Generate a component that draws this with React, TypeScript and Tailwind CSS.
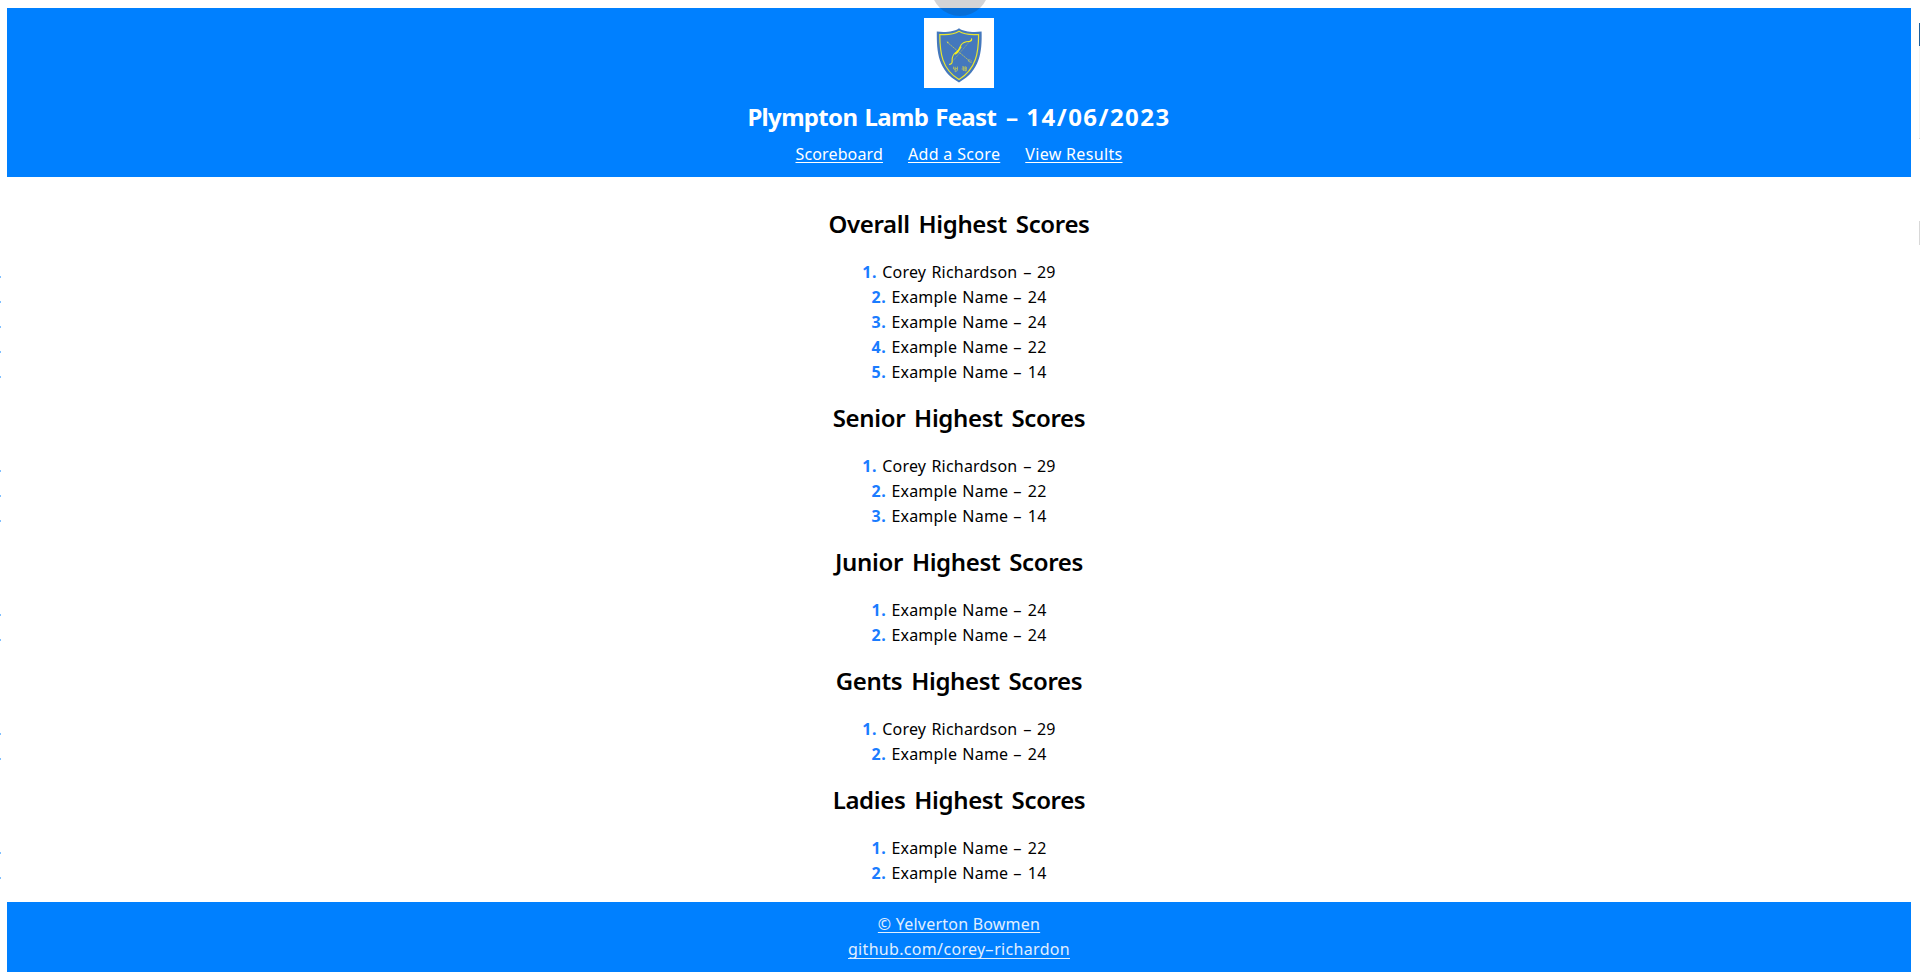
type Entry = { name: string; score: number };
type Board = { title: string; entries: Entry[] };

const corey: Entry = { name: "Corey Richardson", score: 29 };
const example = (score: number): Entry => ({ name: "Example Name", score });

const boards: Board[] = [
  { title: "Overall Highest Scores", entries: [corey, example(24), example(24), example(22), example(14)] },
  { title: "Senior Highest Scores", entries: [corey, example(22), example(14)] },
  { title: "Junior Highest Scores", entries: [example(24), example(24)] },
  { title: "Gents Highest Scores", entries: [corey, example(24)] },
  { title: "Ladies Highest Scores", entries: [example(22), example(14)] },
];

const link = "underline decoration-1 underline-offset-2 [text-decoration-skip-ink:none]";

function Crest() {
  return (
    <svg viewBox="0 0 70 70" className="block size-[70px] bg-white" role="img">
      <path d="M35 10.2C30.5 13.6 22 14.6 12.8 13.6C12.6 34 14 53 35 64.4C56 53 58.2 34 57.6 13.6C48 14.6 39.5 13.6 35 10.2Z" fill="#4478bd" />
      <path d="M35 13.3C30.8 16 23.5 17.1 15.8 16.5C15.8 34.5 17.8 51 35 61.6C52.2 51 54.6 34.5 54.6 16.5C46.8 17.1 39.2 16 35 13.3Z" fill="none" stroke="#e9e62e" strokeWidth="1.2" />
      <path d="M26.6 45.6L47.4 21.4" stroke="#a9b76b" strokeWidth="0.6" strokeDasharray="1.5 .6" />
      <path d="M23.2 24.2L45.5 43" stroke="#bdc561" strokeWidth="0.8" strokeDasharray="2 .4" />
      <path d="M22.6 23.6L24.8 24.1L23.6 25.5Z" fill="#d7d84a" />
      <path d="M43.8 42.6L46.4 41.4M45 43.8L47.8 42.6M45.6 44.8L48 44M44.6 41.6L44.8 44" stroke="#b4c06a" strokeWidth="0.6" />
      <path d="M25.6 46.4C27.8 46.2 28.3 44.8 28.1 43C27.8 38.5 28.8 36.2 32.6 33.9C36 31.8 35.2 30.2 37.2 26.8C39.3 23.5 42.4 23.6 45.6 23.4C47.1 23.2 47.8 22.4 47.6 20.8" fill="none" stroke="#f3ed20" strokeWidth="1.1" strokeLinecap="round" />
      <path d="M31 36C34.8 33.8 34.9 31.5 37 28.6" fill="none" stroke="#f3ed20" strokeWidth="1.7" />
      <path d="M29.6 48.6V51L31.4 51.4M31.2 48.8V53.8M33.4 48.6V52.4L31.4 53.8M31.4 50.6H33.2" fill="none" stroke="#c9cd53" strokeWidth="0.8" />
      <path d="M38 49.2L39.4 48.6V53M37.6 51H39.4M40.9 48.6V53M40.9 49H42.3V52.8H40.9M40.9 50.8H42.3" fill="none" stroke="#c9cd53" strokeWidth="0.8" />
    </svg>
  );
}

function Dash() {
  return <span className="mx-[1.8px] inline-block scale-x-[1.8]">-</span>;
}

function ScoreBoard({ title, entries }: Board) {
  return (
    <section className="mb-[17px]">
      <h2 className="mb-5 text-2xl/8 font-semibold tracking-[-0.35px] [word-spacing:3px]">{title}</h2>
      <ol>
        {entries.map((e, i) => (
          <li key={i} className="relative h-[25px] leading-[25px] tracking-[0.2px] [word-spacing:0.9px]">
            <span className="absolute top-4 -left-[7px] h-0.5 w-px bg-[#80c0ff]" />
            <span className="font-bold tracking-[0.5px] text-[#1a7cff]">{i + 1}.</span> {e.name} <Dash /> {e.score}
          </li>
        ))}
      </ol>
    </section>
  );
}

export default function App() {
  return (
    <div className="relative h-[973px] overflow-hidden bg-white pt-2 pr-[9px] pl-[7px] text-center font-['Noto_Sans',sans-serif] text-base text-black">
      <header className="flex h-[169px] flex-col items-center bg-[#0080ff] pt-2.5 text-white">
        <Crest />
        <h1 className="mt-[13px] text-2xl/8 font-bold tracking-[-0.67px] [word-spacing:1.5px]">
          Plympton Lamb Feast <span className="mx-[4.5px] inline-block scale-x-[1.7] font-semibold">-</span>{" "}
          <span className="tracking-[1.45px]">14/06/2023</span>
        </h1>
        <nav className="mt-[9px] flex gap-[25px] leading-[25px]">
          <a href="#" className={`${link} tracking-[0.14px]`}>Scoreboard</a>
          <a href="#" className={`${link} tracking-[0.33px]`}>Add a Score</a>
          <a href="#" className={`${link} tracking-[0.33px]`}>View Results</a>
        </nav>
      </header>

      <main className="pt-[31px]">
        {boards.map((b) => (
          <ScoreBoard key={b.title} {...b} />
        ))}
      </main>

      <footer className="-mt-px flex h-[70px] flex-col items-center bg-[#0080ff] pt-2.5 leading-[25px] text-[#e0efff]">
        <a href="#" className={`${link} tracking-[0.22px]`}>© Yelverton Bowmen</a>
        <a href="#" className="relative tracking-[0.32px] after:absolute after:inset-x-0 after:bottom-[3px] after:h-px after:bg-[#e0efff]">
          github.com/corey<span className="mx-[1.6px] inline-block scale-x-[1.8]">-</span>richardon
        </a>
      </footer>

      <div className="absolute -top-[42px] left-[930.5px] size-[58px] rounded-full bg-[#282832]/20" />
      <div className="absolute top-[23px] right-0 flex w-px flex-col">
        <span className="h-[23px] bg-[#1f5f9a]" />
        <span className="h-[92px] bg-[#f3f3f3]" />
        <span className="h-px bg-[#d5d5d5]" />
        <span className="mt-[82px] h-6 bg-[#d8d8d8]" />
      </div>
    </div>
  );
}
